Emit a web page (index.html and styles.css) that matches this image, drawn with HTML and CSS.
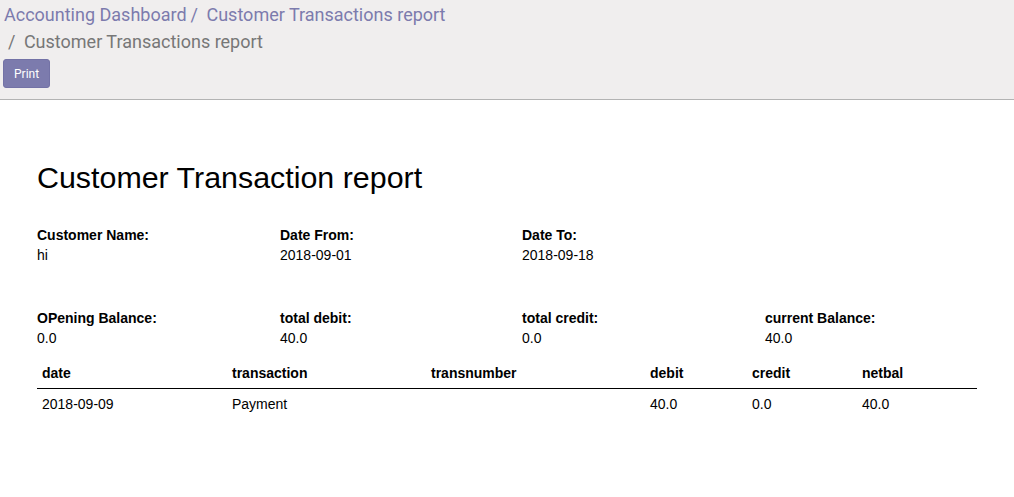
FILE: index.html
```html
<!DOCTYPE html>
<html>
<head>
<meta charset="utf-8">
<link rel="stylesheet" href="styles.css">
</head>
<body>
<div class="control-panel">
  <ol class="breadcrumb">
    <li class="crumb link">Accounting Dashboard</li>
    <li class="crumb link">Customer Transactions report</li>
    <li class="crumb active">Customer Transactions report</li>
  </ol>
  <div class="buttons">
    <button class="btn-print">Print</button>
  </div>
</div>
<div class="report">
  <h2 class="title">Customer Transaction report</h2>
  <div class="info-row first">
    <div class="info"><div class="label">Customer Name:</div><div class="value">hi</div></div>
    <div class="info"><div class="label">Date From:</div><div class="value">2018-09-01</div></div>
    <div class="info"><div class="label">Date To:</div><div class="value">2018-09-18</div></div>
  </div>
  <div class="info-row">
    <div class="info"><div class="label">OPening Balance:</div><div class="value">0.0</div></div>
    <div class="info"><div class="label">total debit:</div><div class="value">40.0</div></div>
    <div class="info"><div class="label">total credit:</div><div class="value">0.0</div></div>
    <div class="info"><div class="label">current Balance:</div><div class="value">40.0</div></div>
  </div>
  <table class="tx">
    <thead>
      <tr>
        <th class="c-date">date</th>
        <th class="c-trans">transaction</th>
        <th class="c-num">transnumber</th>
        <th class="c-debit">debit</th>
        <th class="c-credit">credit</th>
        <th class="c-bal">netbal</th>
      </tr>
    </thead>
    <tbody>
      <tr>
        <td>2018-09-09</td>
        <td>Payment</td>
        <td></td>
        <td>40.0</td>
        <td>0.0</td>
        <td>40.0</td>
      </tr>
    </tbody>
  </table>
</div>
</body>
</html>
```
FILE: styles.css
```css
html, body {
  margin: 0;
  padding: 0;
  background: #ffffff;
}
body {
  font-family: Roboto, "Liberation Sans", sans-serif;
}
.control-panel {
  background: #f0eeee;
  border-bottom: 1px solid #b3b3b3;
  padding: 1px 0 11px 0;
}
.breadcrumb {
  list-style: none;
  margin: 0;
  padding: 0 0 0 4px;
  width: 50%;
  display: flex;
  flex-wrap: wrap;
  font-size: 18px;
  line-height: 27px;
}
.crumb + .crumb::before {
  content: "/\00a0";
  padding: 0 4px 0 4px;
}
.crumb.link {
  color: #7c7bad;
}
.crumb.active {
  color: #777777;
}
.buttons {
  padding: 4px 0 0 3px;
}
.btn-print {
  font-family: Roboto, "Liberation Sans", sans-serif;
  font-size: 12px;
  line-height: 18px;
  height: 29px;
  padding: 5px 10px;
  color: #ffffff;
  background: #7c7bad;
  border: 1px solid #7372a6;
  border-radius: 3px;
}
.report {
  padding: 60px 0 0 37px;
  font-family: "Liberation Sans", Arial, sans-serif;
  color: #000000;
  font-size: 14px;
  line-height: 20px;
}
.title {
  margin: 0;
  font-size: 30.4px;
  font-weight: normal;
  line-height: 34px;
}
.info-row {
  display: grid;
  grid-template-columns: 243px 242px 243px 242px;
}
.info-row.first {
  margin-top: 31px;
  margin-bottom: 43px;
}
.label {
  font-weight: bold;
}
.tx {
  margin-top: 10px;
  width: 940px;
  border-collapse: collapse;
}
.tx th, .tx td {
  padding: 5px;
  text-align: left;
}
.tx th {
  font-weight: bold;
  border-bottom: 1px solid #000000;
}
.c-date { width: 180px; }
.c-trans { width: 189px; }
.c-num { width: 209px; }
.c-debit { width: 92px; }
.c-credit { width: 100px; }
.c-bal { width: 110px; }
```
